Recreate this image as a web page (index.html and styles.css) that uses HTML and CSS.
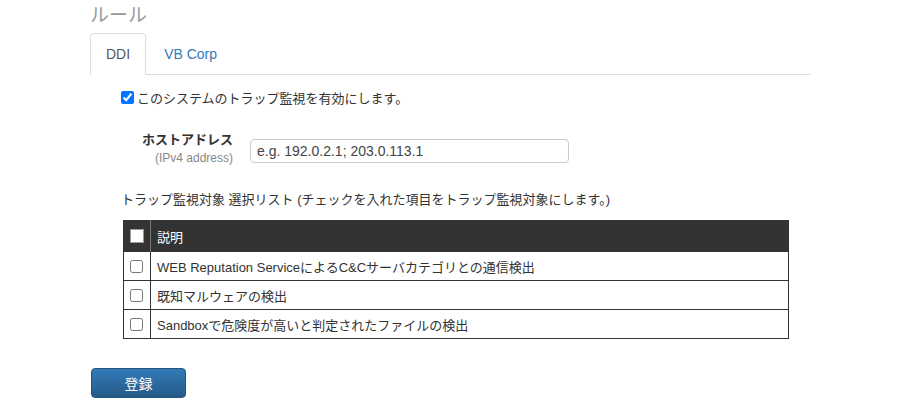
FILE: index.html
```html
<!DOCTYPE html>
<html lang="ja">
<head>
    <meta charset="UTF-8">
    <title>ルール</title>
    <link rel="stylesheet" href="styles.css">
</head>
<body>
    <div class="page">
        <h3 class="title">ルール</h3>

        <ul class="tabs">
            <li class="tab active">DDI</li>
            <li class="tab">VB Corp</li>
        </ul>

        <div class="panel">
            <label class="enable">
                <input type="checkbox" checked>
                <span>このシステムのトラップ監視を有効にします。</span>
            </label>

            <div class="form-row">
                <div class="form-label">
                    <div class="label-main">ホストアドレス</div>
                    <div class="label-sub">(IPv4 address)</div>
                </div>
                <input type="text" class="host-input" placeholder="e.g. 192.0.2.1; 203.0.113.1">
            </div>

            <p class="list-title">トラップ監視対象 選択リスト (チェックを入れた項目をトラップ監視対象にします。)</p>

            <table class="rules">
                <thead>
                    <tr>
                        <th class="check-col"><span class="head-box"></span></th>
                        <th>説明</th>
                    </tr>
                </thead>
                <tbody>
                    <tr>
                        <td class="check-col"><input type="checkbox"></td>
                        <td>WEB Reputation ServiceによるC&amp;Cサーバカテゴリとの通信検出</td>
                    </tr>
                    <tr>
                        <td class="check-col"><input type="checkbox"></td>
                        <td>既知マルウェアの検出</td>
                    </tr>
                    <tr>
                        <td class="check-col"><input type="checkbox"></td>
                        <td>Sandboxで危険度が高いと判定されたファイルの検出</td>
                    </tr>
                </tbody>
            </table>
        </div>

        <button class="submit">登録</button>
    </div>
</body>
</html>
```

FILE: styles.css
```css
body {
    margin: 0;
    font-family: "Liberation Sans", "Noto Sans CJK JP", sans-serif;
    font-size: 13px;
    color: #333;
    background: #fff;
}
.page {
    width: 721px;
    padding-left: 90px;
}
.title {
    margin: 0;
    padding-top: 4px;
    font-size: 19px;
    font-weight: normal;
    line-height: 24px;
    color: #999;
}
.tabs {
    display: flex;
    list-style: none;
    margin: 5px 0 0;
    padding: 0;
    border-bottom: 1px solid #ddd;
}
.tab {
    margin-right: 2px;
    margin-bottom: -1px;
    padding: 10px 15px;
    font-size: 14px;
    line-height: 20px;
    color: #337ab7;
    border: 1px solid transparent;
    border-radius: 4px 4px 0 0;
}
.tab.active {
    color: #555;
    background: #fff;
    border-color: #ddd;
    border-bottom-color: transparent;
}
.panel {
    padding-left: 31px;
}
.enable {
    display: flex;
    align-items: center;
    gap: 3px;
    margin-top: 13px;
    height: 18px;
}
.enable input {
    margin: 0;
    width: 13px;
    height: 13px;
}
.form-row {
    display: flex;
    align-items: flex-start;
    margin-top: 25px;
}
.form-label {
    width: 112px;
    text-align: right;
    margin-right: 17px;
}
.label-main {
    font-weight: bold;
    line-height: 18px;
}
.label-sub {
    margin-top: 1px;
    font-size: 12px;
    line-height: 17px;
    color: #888;
}
.host-input {
    width: 319px;
    height: 24px;
    box-sizing: border-box;
    margin-top: 8px;
    padding: 0 6px;
    font-family: "Liberation Sans", sans-serif;
    font-size: 14px;
    border: 1px solid #ccc;
    border-radius: 4px;
}
.host-input::placeholder {
    color: #444;
}
.list-title {
    margin: 24px 0 11px;
    line-height: 18px;
}
.rules {
    width: 666px;
    margin-left: 2px;
    border-collapse: collapse;
    border: 1px solid #333;
}
.rules th {
    height: 30px;
    padding: 0 6px;
    background: #333;
    color: #fff;
    font-weight: normal;
    text-align: left;
    border-left: 1px solid #777;
}
.rules td {
    height: 28px;
    padding: 0 6px;
    border-top: 1px solid #333;
    border-left: 1px solid #333;
}
.rules .check-col {
    width: 13px;
    padding: 0 6px;
    border-left: none;
}
.rules td input {
    display: block;
    margin: 0;
    width: 13px;
    height: 13px;
}
.head-box {
    display: block;
    width: 12px;
    height: 12px;
    background: #fff;
    border: 1px solid #999;
}
.submit {
    display: block;
    margin: 29px 0 0 1px;
    width: 95px;
    height: 30px;
    font-family: "Noto Sans CJK JP", sans-serif;
    font-size: 14px;
    color: #fff;
    background: linear-gradient(#337ab7, #265a88);
    border: 1px solid #245580;
    border-radius: 4px;
    cursor: pointer;
}
```
